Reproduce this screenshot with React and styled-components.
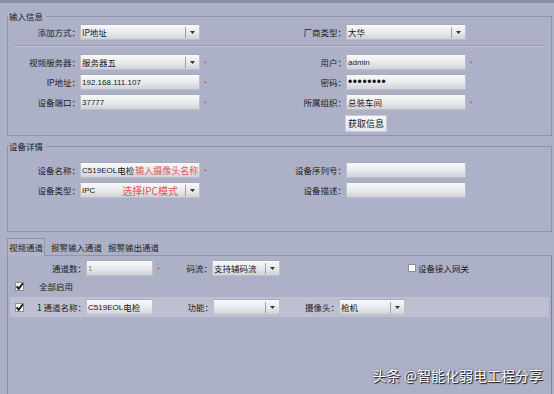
import React from "react";
import styled, { createGlobalStyle, css } from "styled-components";

const GlobalStyle = createGlobalStyle`
  html, body {
    margin: 0;
    padding: 0;
    background: #adb1c7;
  }
  body {
    font-family: "Liberation Sans", "Noto Sans CJK SC", sans-serif;
  }
`;

const cjk = `"Noto Sans CJK SC", sans-serif`;

const Page = styled.div`
  position: relative;
  width: 554px;
  height: 394px;
  overflow: hidden;
  background: #adb1c7;
  color: #1c1c22;
`;

const TopStrip = styled.div`
  height: 3px;
  background: #8a8fa6;
`;

const Main = styled.div`
  padding: 0 2px 0 7px;
`;

const Group = styled.fieldset`
  margin: ${p => p.$mt}px 0 0;
  padding: ${p => p.$pt}px 0 ${p => p.$pb}px;
  border: 1px solid #8f94aa;
  min-inline-size: 0;
`;

const Legend = styled.legend`
  padding: 0 3px 0 1px;
  margin: 0;
  font-family: ${cjk};
  font-size: 8.5px;
  line-height: 13px;
`;

const Row = styled.div`
  display: flex;
  align-items: center;
  height: 16px;
  margin-top: ${p => p.$mt || 0}px;
`;

const Label = styled.div`
  flex: none;
  width: ${p => p.$w}px;
  text-align: right;
  font-family: ${cjk};
  font-size: 8.5px;
  white-space: nowrap;
`;

const Slot = styled.div`
  flex: none;
  width: ${p => p.$w}px;
  padding-left: ${p => p.$pl || 4}px;
  box-sizing: border-box;
  display: flex;
  align-items: center;
`;

const Star = styled.span`
  color: #d9485c;
  font-size: 8px;
  line-height: 8px;
  padding-top: 3px;
`;

const Box = styled.div`
  flex: none;
  width: ${p => p.$w}px;
  height: 16px;
  box-sizing: border-box;
  border: 1px solid #bcbfcc;
  border-top-color: #a7aab8;
  background: linear-gradient(#f9f9f9, #e8e9ec 55%, #d1d2d7);
  display: flex;
  align-items: center;
  padding-left: 1px;
  font-size: 8px;
  white-space: nowrap;
  overflow: hidden;
  color: ${p => (p.$muted ? "#8a8a8a" : "#15151a")};
`;

const CjkText = styled.span`
  font-family: ${cjk};
  font-size: 8.5px;
`;

const Hint = styled.span`
  font-family: ${cjk};
  font-size: ${p => p.$size}px;
  color: #e6505c;
  margin-left: ${p => p.$ml || 0}px;
`;

const Dots = styled.span`
  font-size: 12px;
  letter-spacing: 0.6px;
  line-height: 12px;
`;

const ArrowPart = styled.div`
  margin-left: auto;
  flex: none;
  width: 13px;
  height: 11px;
  border-left: 1px solid #9ea0aa;
  display: flex;
  align-items: center;
  justify-content: center;
`;

const Divider = styled.div`
  margin: 5px 7px 7px 5px;
  border-top: 1px solid #979cb2;
  border-bottom: 1px solid #c5c8d6;
`;

const Button = styled.button`
  flex: none;
  height: 17px;
  margin-left: -1px;
  padding: 0 2px;
  border: 1px solid #c9cbd5;
  background: linear-gradient(#f7f8fb, #e6e8ee);
  font-family: ${cjk};
  font-size: 9px;
  line-height: 15px;
  color: #111;
`;

const TabBar = styled.div`
  display: flex;
  align-items: flex-end;
  height: 17px;
  margin-top: 6px;
  border-bottom: 1px solid #8f94aa;
`;

const Tab = styled.div`
  height: 16px;
  line-height: 16px;
  padding: 0 1px;
  margin-left: ${p => p.$ml || 0}px;
  font-family: ${cjk};
  font-size: 8.5px;
  color: #222;
  ${p =>
    p.$active &&
    css`
      height: 17px;
      margin-bottom: -1px;
      border: 1px solid #8f94aa;
      border-bottom: none;
      background: #b1b5ca;
    `}
`;

const Panel = styled.div`
  height: 140px;
  padding-top: 4px;
  border-left: 1px solid #868ba2;
  border-right: 1px solid #7e839a;
`;

const Band = styled.div`
  display: flex;
  align-items: center;
  height: 20px;
  margin: 3px 2px 0;
  padding-left: 5px;
  background: #bcc0d1;
`;

const CheckText = styled.span`
  font-family: ${cjk};
  font-size: 8.5px;
  margin-left: ${p => p.$ml}px;
`;

const Watermark = styled.div`
  position: absolute;
  right: 11px;
  bottom: 10px;
  font-family: ${cjk};
  font-size: 14px;
  line-height: 18px;
  color: #fff;
  text-shadow: 1px 1px 1px rgba(0, 0, 0, 0.85), 0 0 2px rgba(0, 0, 0, 0.5);
`;

const Arrow = () => (
  <ArrowPart>
    <svg width="5" height="3" viewBox="0 0 5 3">
      <path d="M0 0 H5 L2.5 3 Z" fill="#333" />
    </svg>
  </ArrowPart>
);

const Select = ({ w, children }) => (
  <Box $w={w}>
    {children}
    <Arrow />
  </Box>
);

const Check = ({ checked }) =>
  checked ? (
    <svg width="9" height="9" viewBox="0 0 9 9" style={{ flex: "none" }}>
      <rect x="0.5" y="0.5" width="8" height="8" fill="#eef0f3" stroke="#8c8f9c" />
      <path d="M1.6 4.4 L3.7 6.9 L7.9 1.2" fill="none" stroke="#111" strokeWidth="1.8" />
    </svg>
  ) : (
    <svg width="8" height="8" viewBox="0 0 8 8" style={{ flex: "none" }}>
      <rect x="0.5" y="0.5" width="7" height="7" fill="#f7f7f7" stroke="#8c8f9c" />
    </svg>
  );

const Required = ({ w = 76 }) => (
  <Slot $w={w}>
    <Star>*</Star>
  </Slot>
);

export default function App() {
  return (
    <Page>
      <GlobalStyle />
      <TopStrip />
      <Main>
        <Group $mt={7} $pt={1} $pb={4}>
          <Legend>输入信息</Legend>
          <Row>
            <Label $w={72}>添加方式：</Label>
            <Select w={120}>
              <CjkText>IP地址</CjkText>
            </Select>
            <Slot $w={76} />
            <Label $w={70}>厂商类型：</Label>
            <Select w={120}>
              <CjkText>大华</CjkText>
            </Select>
          </Row>
          <Divider />
          <Row>
            <Label $w={72}>视频服务器：</Label>
            <Select w={120}>
              <CjkText>服务器五</CjkText>
            </Select>
            <Required />
            <Label $w={70}>用户：</Label>
            <Box $w={120}>admin</Box>
            <Required />
          </Row>
          <Row $mt={4}>
            <Label $w={72}>IP地址：</Label>
            <Box $w={120}>192.168.111.107</Box>
            <Required />
            <Label $w={70}>密码：</Label>
            <Box $w={120}>
              <Dots>••••••••</Dots>
            </Box>
          </Row>
          <Row $mt={4}>
            <Label $w={72}>设备端口：</Label>
            <Box $w={120}>37777</Box>
            <Required />
            <Label $w={70}>所属组织：</Label>
            <Box $w={120}>
              <CjkText>总装车间</CjkText>
            </Box>
            <Required />
          </Row>
          <Row $mt={5}>
            <Slot $w={338} />
            <Button>获取信息</Button>
          </Row>
        </Group>

        <Group $mt={4} $pt={9} $pb={33}>
          <Legend>设备详情</Legend>
          <Row>
            <Label $w={72}>设备名称：</Label>
            <Box $w={120}>
              C519EOL<CjkText>电检</CjkText>
              <Hint $size={9} $ml={1}>输入摄像头名称</Hint>
            </Box>
            <Required />
            <Label $w={70}>设备序列号：</Label>
            <Box $w={120} />
          </Row>
          <Row $mt={4}>
            <Label $w={72}>设备类型：</Label>
            <Select w={120}>
              <span>IPC</span>
              <Hint $size={10} $ml={27}>选择IPC模式</Hint>
            </Select>
            <Slot $w={76} />
            <Label $w={70}>设备描述：</Label>
            <Box $w={120} />
          </Row>
        </Group>

        <TabBar>
          <Tab $active>视频通道</Tab>
          <Tab $ml={5}>报警输入通道</Tab>
          <Tab $ml={4}>报警输出通道</Tab>
        </TabBar>
        <Panel>
          <Row>
            <Label $w={78}>通道数：</Label>
            <Box $w={67} $muted>
              1
            </Box>
            <Required w={30} />
            <Label $w={29}>码流：</Label>
            <Select w={68}>
              <CjkText>支持辅码流</CjkText>
            </Select>
            <Slot $w={128} />
            <Check />
            <CheckText $ml={2}>设备接入网关</CheckText>
          </Row>
          <Row $mt={2}>
            <Slot $w={16} $pl={7}>
              <Check checked />
            </Slot>
            <CheckText $ml={15}>全部启用</CheckText>
          </Row>
          <Band>
            <Check checked />
            <Label $w={62}>1 通道名称：</Label>
            <Box $w={67}>
              C519EOL<CjkText>电检</CjkText>
            </Box>
            <Label $w={60}>功能：</Label>
            <Select w={67} />
            <Label $w={59}>摄像头：</Label>
            <Select w={66}>
              <CjkText>枪机</CjkText>
            </Select>
          </Band>
        </Panel>
      </Main>
      <Watermark>头条 @智能化弱电工程分享</Watermark>
    </Page>
  );
}
